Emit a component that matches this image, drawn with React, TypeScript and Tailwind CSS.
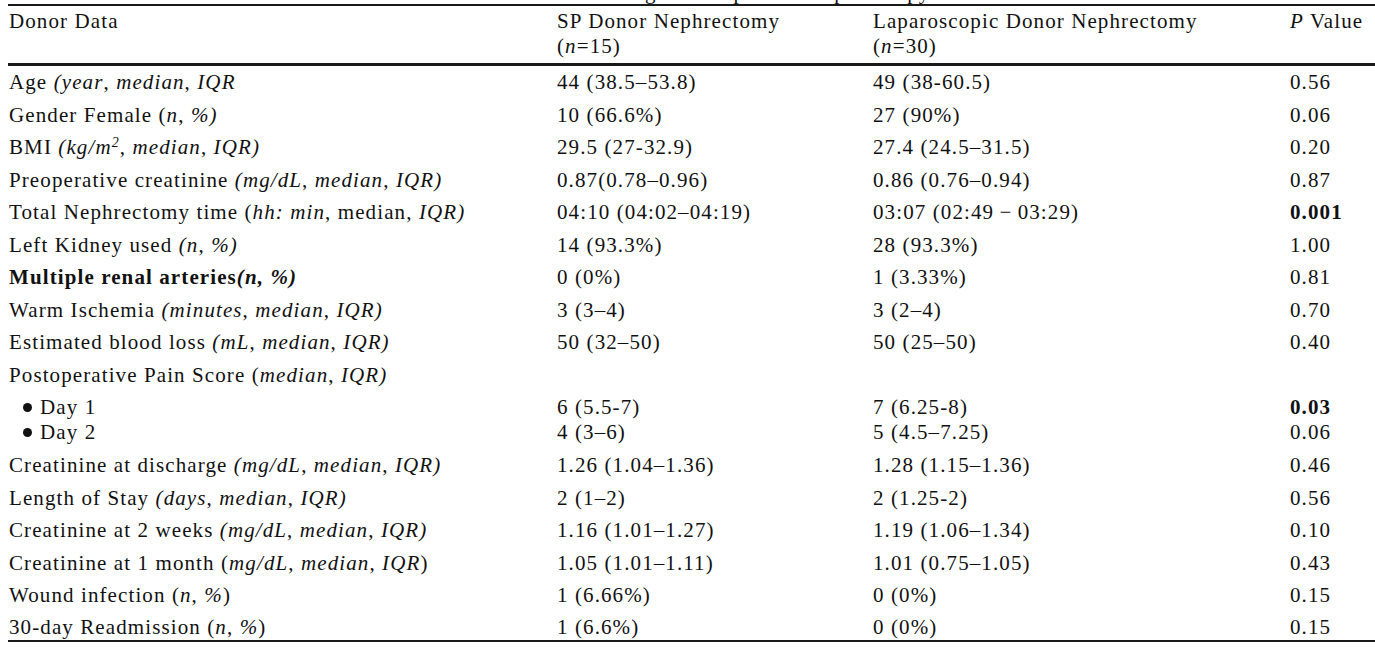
import React from 'react';

type Row = {
  label: React.ReactNode;
  sp: string;
  lap: string;
  p: string;
  bold?: boolean;
  bullet?: boolean;
};

const rows: Row[] = [
  { label: <>Age <i>(year</i>, <i>median</i>, <i>IQR</i></>, sp: '44 (38.5–53.8)', lap: '49 (38-60.5)', p: '0.56' },
  { label: <>Gender Female (<i>n</i>, <i>%)</i></>, sp: '10 (66.6%)', lap: '27 (90%)', p: '0.06' },
  { label: <>BMI <i>(kg/m<sup className="text-[14px]">2</sup></i>, <i>median</i>, <i>IQR)</i></>, sp: '29.5 (27-32.9)', lap: '27.4 (24.5–31.5)', p: '0.20' },
  { label: <>Preoperative creatinine <i>(mg/dL</i>, <i>median</i>, <i>IQR)</i></>, sp: '0.87(0.78–0.96)', lap: '0.86 (0.76–0.94)', p: '0.87' },
  { label: <>Total Nephrectomy time (<i>hh: min</i>, median, <i>IQR)</i></>, sp: '04:10 (04:02–04:19)', lap: '03:07 (02:49\u2009−\u200903:29)', p: '0.001', bold: true },
  { label: <>Left Kidney used <i>(n</i>, <i>%)</i></>, sp: '14 (93.3%)', lap: '28 (93.3%)', p: '1.00' },
  { label: <b>Multiple renal arteries<i>(n, %)</i></b>, sp: '0 (0%)', lap: '1 (3.33%)', p: '0.81' },
  { label: <>Warm Ischemia <i>(minutes</i>, <i>median</i>, <i>IQR)</i></>, sp: '3 (3–4)', lap: '3 (2–4)', p: '0.70' },
  { label: <>Estimated blood loss <i>(mL</i>, <i>median</i>, <i>IQR)</i></>, sp: '50 (32–50)', lap: '50 (25–50)', p: '0.40' },
  { label: <>Postoperative Pain Score (<i>median</i>, <i>IQR)</i></>, sp: '', lap: '', p: '' },
];

const dayRows: Row[] = [
  { label: 'Day 1', sp: '6 (5.5-7)', lap: '7 (6.25-8)', p: '0.03', bold: true },
  { label: 'Day 2', sp: '4 (3–6)', lap: '5 (4.5–7.25)', p: '0.06' },
];

const lowerRows: Row[] = [
  { label: <>Creatinine at discharge <i>(mg/dL</i>, <i>median</i>, <i>IQR)</i></>, sp: '1.26 (1.04–1.36)', lap: '1.28 (1.15–1.36)', p: '0.46' },
  { label: <>Length of Stay <i>(days</i>, <i>median</i>, <i>IQR)</i></>, sp: '2 (1–2)', lap: '2 (1.25-2)', p: '0.56' },
  { label: <>Creatinine at 2 weeks <i>(mg/dL</i>, <i>median</i>, <i>IQR)</i></>, sp: '1.16 (1.01–1.27)', lap: '1.19 (1.06–1.34)', p: '0.10' },
  { label: <>Creatinine at 1 month (<i>mg/dL</i>, <i>median</i>, <i>IQR</i>)</>, sp: '1.05 (1.01–1.11)', lap: '1.01 (0.75–1.05)', p: '0.43' },
  { label: <>Wound infection (<i>n</i>, <i>%</i>)</>, sp: '1 (6.66%)', lap: '0 (0%)', p: '0.15' },
];

const cols = 'grid grid-cols-[548px_316px_417px_1fr] pl-[1px]';

function DataRow({ row, className }: { row: Row; className: string }) {
  return (
    <div className={`${cols} ${className}`}>
      <div className={row.bullet ? 'pl-[14px] flex items-center' : 'whitespace-nowrap'}>
        {row.bullet && <span className="inline-block w-[9px] h-[9px] rounded-full bg-[#111] mr-[8px]" />}
        {row.label}
      </div>
      <div className="whitespace-nowrap">{row.sp}</div>
      <div className="whitespace-nowrap">{row.lap}</div>
      <div className={row.bold ? 'font-bold' : ''}>{row.p}</div>
    </div>
  );
}

export default function App() {
  return (
    <div className="w-[1375px] h-[651px] overflow-hidden bg-white text-[#111] text-[21px] tracking-[1.1px] font-['Liberation_Serif',serif]">
      {/* caption of the table, cut off by the top edge */}
      <div className="h-[4px] overflow-hidden">
        <div className="-mt-[20px] leading-[24px] text-center pl-[20px] whitespace-nowrap">
          Outcomes following SP compared to laparoscopy
        </div>
      </div>
      <div className="ml-[8px]">
        {/* header */}
        <div className={`${cols} border-t-2 border-b-[3px] border-[#1a1a1a] pt-[3px] pb-[4px] leading-[25px]`}>
          <div>Donor Data</div>
          <div>
            SP Donor Nephrectomy
            <br />(<i>n</i>=15)
          </div>
          <div>
            Laparoscopic Donor Nephrectomy
            <br />(<i>n</i>=30)
          </div>
          <div className="whitespace-nowrap">
            <i>P</i> Value
          </div>
        </div>

        {rows.map((r, i) => (
          <DataRow key={i} row={r} className="leading-[32.5px]" />
        ))}
        <div className="pt-[4px] pb-[4px]">
          {dayRows.map((r, i) => (
            <DataRow key={i} row={{ ...r, bullet: true }} className="leading-[25px]" />
          ))}
        </div>
        {lowerRows.map((r, i) => (
          <DataRow key={i} row={r} className="leading-[32.5px]" />
        ))}
        <DataRow
          row={{ label: <>30-day Readmission (<i>n</i>, <i>%</i>)</>, sp: '1 (6.6%)', lap: '0 (0%)', p: '0.15' }}
          className="leading-[30px] h-[28px] border-b-2 border-[#1a1a1a] box-content"
        />
      </div>
    </div>
  );
}
